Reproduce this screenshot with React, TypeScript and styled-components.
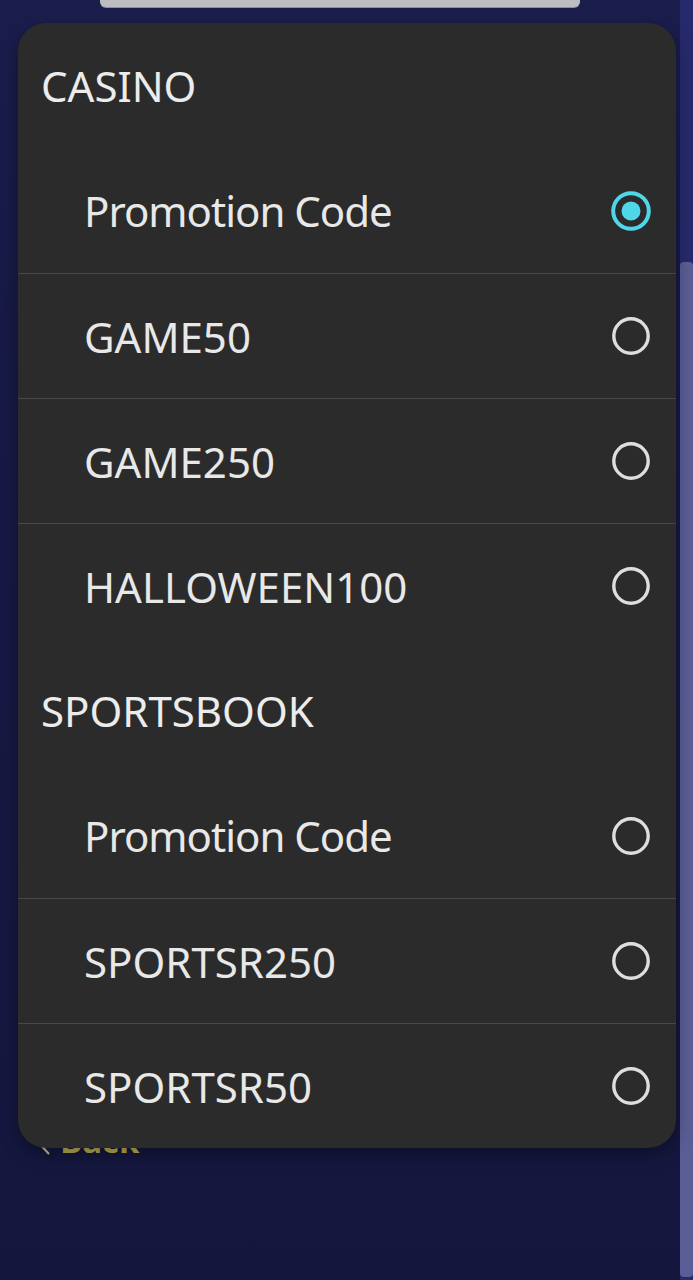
import React from "react";
import styled, { createGlobalStyle } from "styled-components";

const Global = createGlobalStyle`
  html, body { margin: 0; padding: 0; background: #15173f; }
  body { font-family: "Noto Sans", "Open Sans", sans-serif; }
  * { box-sizing: border-box; }
`;

const Screen = styled.div`
  position: relative;
  width: 693px;
  height: 1280px;
  display: flex;
  overflow: hidden;
`;

const Page = styled.div`
  flex: 1;
  display: flex;
  flex-direction: column;
  background: linear-gradient(180deg, #1b1d4d 0px, #181a47 300px, #15173f 1100px, #14163e 100%);
`;

const FieldEdge = styled.div`
  margin: 0 100px 0 100px;
  height: 7px;
  background: #bdbdc2;
  border-radius: 0 0 6px 6px;
  box-shadow: 0 1px 0 #8e8fa6;
`;

const Spacer = styled.div`
  flex: 1;
`;

const BackLink = styled.div`
  display: flex;
  align-items: center;
  gap: 10px;
  margin: 0 0 123px 36px;
  height: 32px;
  color: #b8ad4e;
  font-family: "Open Sans", sans-serif;
  font-weight: 700;
  font-size: 33px;
  line-height: 32px;
`;

const ScrollTrack = styled.div`
  width: 13px;
  background: #262a6c;
  display: flex;
  flex-direction: column;
`;

const ScrollThumb = styled.div`
  margin-top: 262px;
  height: 1015px;
  background: #5a5e96;
  border-radius: 4px;
`;

const Dialog = styled.div`
  position: absolute;
  top: 23px;
  left: 18px;
  width: 658px;
  background: #2b2b2b;
  border-radius: 28px;
  overflow: hidden;
  display: flex;
  flex-direction: column;
  box-shadow: 0 6px 18px rgba(0, 0, 0, 0.35);
`;

const SectionTitle = styled.div`
  height: 125px;
  display: flex;
  align-items: center;
  padding-left: 23px;
  color: #ececec;
  font-size: 42px;
`;

const Option = styled.div<{ $divider: boolean }>`
  height: 125px;
  display: flex;
  align-items: center;
  justify-content: space-between;
  padding: 0 25px 0 66px;
  color: #e8e8e8;
  font-size: 42px;
  border-top: ${(p) => (p.$divider ? "1.5px solid #484848" : "none")};
`;

const Label = styled.span<{ $mixed: boolean }>`
  letter-spacing: ${(p) => (p.$mixed ? "-1px" : "0")};
`;

const Radio = ({ checked }: { checked: boolean }) =>
  checked ? (
    <svg width="40" height="40" viewBox="0 0 40 40">
      <circle cx="20" cy="20" r="17.8" fill="none" stroke="#4fd6e8" strokeWidth="4" />
      <circle cx="20" cy="20" r="9.5" fill="#4fd6e8" />
    </svg>
  ) : (
    <svg width="40" height="40" viewBox="0 0 40 40">
      <circle cx="20" cy="20" r="17.2" fill="none" stroke="#dedede" strokeWidth="3.4" />
    </svg>
  );

const sections = [
  { title: "CASINO", items: ["Promotion Code", "GAME50", "GAME250", "HALLOWEEN100"] },
  { title: "SPORTSBOOK", items: ["Promotion Code", "SPORTSR250", "SPORTSR50"] },
];

export default function App() {
  return (
    <Screen>
      <Global />
      <Page>
        <FieldEdge />
        <Spacer />
        <BackLink>
          <svg width="14" height="28" viewBox="0 0 14 28">
            <path d="M13 1 L1 14 L13 27" fill="none" stroke="#c8c0a0" strokeWidth="2" />
          </svg>
          <span>Back</span>
        </BackLink>
      </Page>
      <ScrollTrack>
        <ScrollThumb />
      </ScrollTrack>
      <Dialog>
        {sections.map((s, si) => (
          <React.Fragment key={s.title}>
            <SectionTitle>{s.title}</SectionTitle>
            {s.items.map((it, i) => (
              <Option key={it} $divider={i > 0}>
                <Label $mixed={it !== it.toUpperCase()}>{it}</Label>
                <Radio checked={si === 0 && i === 0} />
              </Option>
            ))}
          </React.Fragment>
        ))}
      </Dialog>
    </Screen>
  );
}
